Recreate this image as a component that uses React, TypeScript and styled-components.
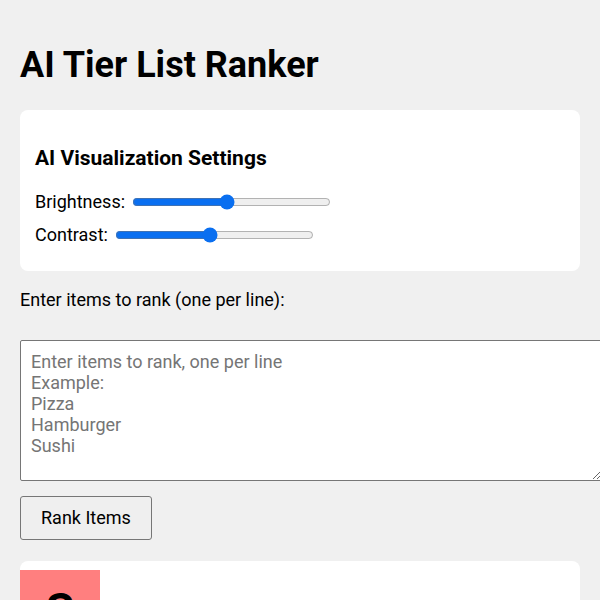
import React, { useState } from 'react';
import styled, { createGlobalStyle } from 'styled-components';

const GlobalStyle = createGlobalStyle`
  body {
    margin: 0;
    padding: 20px;
    background-color: #f0f0f0;
    font-family: Roboto, "Liberation Sans", Arial, sans-serif;
    font-size: 18px;
    color: #000;
  }
`;

interface Tier {
  label: string;
  color: string;
}

const tiers: Tier[] = [
  { label: 'S', color: '#ff7f7f' },
  { label: 'A', color: '#ffbf7f' },
  { label: 'B', color: '#ffdf7f' },
];

const App: React.FC = () => {
  const [brightness, setBrightness] = useState(1);
  const [contrast, setContrast] = useState(1);
  const [items, setItems] = useState('');

  return (
    <>
      <GlobalStyle />
      <Title>AI Tier List Ranker</Title>

      <Panel>
        <PanelHeading>AI Visualization Settings</PanelHeading>
        <SliderList>
          <SliderRow>
            Brightness:
            <Range type="range" min={0.1} max={2} step={0.1} value={brightness} onChange={e => setBrightness(Number(e.target.value))} />
          </SliderRow>
          <SliderRow>
            Contrast:
            <Range type="range" min={0.1} max={2} step={0.1} value={contrast} onChange={e => setContrast(Number(e.target.value))} />
          </SliderRow>
        </SliderList>
      </Panel>

      <FieldLabel htmlFor="items">Enter items to rank (one per line):</FieldLabel>
      <ItemsInput
        id="items"
        value={items}
        onChange={e => setItems(e.target.value)}
        placeholder={'Enter items to rank, one per line\nExample:\nPizza\nHamburger\nSushi'}
      />
      <RankButton>Rank Items</RankButton>

      <TierList>
        {tiers.map(t => (
          <TierRow key={t.label}>
            <TierLabel $color={t.color}>{t.label}</TierLabel>
            <TierItems />
          </TierRow>
        ))}
      </TierList>
    </>
  );
};

export default App;

// Styled components

const Title = styled.h1`
  font-size: 36px;
  font-weight: 700;
  margin: 24px 0;
`;

const Panel = styled.div`
  background-color: white;
  border-radius: 8px;
  padding: 15px 15px 26px;
  margin-bottom: 18px;
`;

const PanelHeading = styled.h3`
  font-size: 21px;
  font-weight: 700;
  margin: 21px 0;
`;

const SliderList = styled.div`
  display: flex;
  flex-direction: column;
  gap: 12px;
`;

const SliderRow = styled.label`
  display: flex;
  align-items: center;
  gap: 7px;
  line-height: 21px;
`;

const Range = styled.input`
  width: 199px;
  margin: 0;
  accent-color: #0a6ff0;
`;

const FieldLabel = styled.label`
  display: block;
  line-height: 21px;
  margin-bottom: 30px;
`;

const ItemsInput = styled.textarea`
  display: block;
  box-sizing: border-box;
  width: calc(100% + 22px);
  height: 141px;
  padding: 10px;
  font-family: Roboto, "Liberation Sans", Arial, sans-serif;
  font-size: 18px;
  border: 1px solid #767676;
  border-radius: 2px;
  margin-bottom: 15px;
`;

const RankButton = styled.button`
  display: block;
  font-family: Roboto, "Liberation Sans", Arial, sans-serif;
  font-size: 18px;
  line-height: 22px;
  padding: 10px 20px;
  background-color: #efefef;
  border: 1px solid #767676;
  border-radius: 3px;
  color: #000;
  margin-bottom: 21px;
  cursor: pointer;
`;

const TierList = styled.div`
  background-color: white;
  border-radius: 8px;
  padding: 9px 0;
`;

const TierRow = styled.div`
  display: flex;
  min-height: 80px;
  margin-bottom: 5px;
`;

const TierLabel = styled.div<{ $color: string }>`
  width: 80px;
  display: flex;
  align-items: center;
  justify-content: center;
  font-size: 46px;
  font-weight: 700;
  background-color: ${props => props.$color};
`;

const TierItems = styled.div`
  flex: 1;
  display: flex;
  flex-wrap: wrap;
  gap: 5px;
  padding: 5px;
`;
